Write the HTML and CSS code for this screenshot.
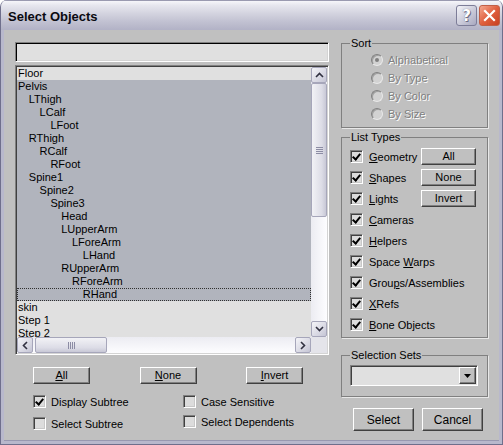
FILE: index.html
```html
<!DOCTYPE html>
<html>
<head>
<meta charset="utf-8">
<title>Select Objects</title>
<link rel="stylesheet" href="styles.css">
</head>
<body>
<div class="window">
  <div class="titlebar">
    <span class="title">Select Objects</span>
    <div class="tbtns">
      <span class="tbtn help">?</span>
      <span class="tbtn close"><svg width="13" height="13" viewBox="0 0 13 13"><path d="M2 2 L11 11 M11 2 L2 11" stroke="#fff" stroke-width="2.2" stroke-linecap="square"/></svg></span>
    </div>
  </div>
  <div class="client">
    <div class="leftcol">
      <div class="search"></div>
      <div class="listbox">
        <div class="items">
          <div class="row l0">Floor</div>
          <div class="row sel l0">Pelvis</div>
          <div class="row sel l1">LThigh</div>
          <div class="row sel l2">LCalf</div>
          <div class="row sel l3">LFoot</div>
          <div class="row sel l1">RThigh</div>
          <div class="row sel l2">RCalf</div>
          <div class="row sel l3">RFoot</div>
          <div class="row sel l1">Spine1</div>
          <div class="row sel l2">Spine2</div>
          <div class="row sel l3">Spine3</div>
          <div class="row sel l4">Head</div>
          <div class="row sel l4">LUpperArm</div>
          <div class="row sel l5">LForeArm</div>
          <div class="row sel l6">LHand</div>
          <div class="row sel l4">RUpperArm</div>
          <div class="row sel l5">RForeArm</div>
          <div class="row sel focus l6">RHand</div>
          <div class="row l0">skin</div>
          <div class="row l0">Step 1</div>
          <div class="row l0">Step 2</div>
        </div>
        <div class="vscroll">
          <span class="sbtn"><svg width="9" height="6" viewBox="0 0 9 6"><path d="M1 5 L4.5 1.5 L8 5" fill="none" stroke="#303040" stroke-width="1.6"/></svg></span>
          <div class="vtrack">
            <span class="vthumb"><span class="grip-h"></span></span>
          </div>
          <span class="sbtn"><svg width="9" height="6" viewBox="0 0 9 6"><path d="M1 1 L4.5 4.5 L8 1" fill="none" stroke="#303040" stroke-width="1.6"/></svg></span>
        </div>
        <div class="hscroll">
          <span class="sbtn"><svg width="6" height="9" viewBox="0 0 6 9"><path d="M5 1 L1.5 4.5 L5 8" fill="none" stroke="#303040" stroke-width="1.6"/></svg></span>
          <div class="htrack">
            <span class="hthumb"><span class="grip-v"></span></span>
          </div>
          <span class="sbtn"><svg width="6" height="9" viewBox="0 0 6 9"><path d="M1 1 L4.5 4.5 L1 8" fill="none" stroke="#303040" stroke-width="1.6"/></svg></span>
        </div>
        <div class="corner"></div>
      </div>
      <div class="btnrow">
        <span class="btn small"><u>A</u>ll</span>
        <span class="btn small"><u>N</u>one</span>
        <span class="btn small"><u>I</u>nvert</span>
      </div>
      <div class="opts">
        <label class="chk"><span class="box on"></span>Display Subtree</label>
        <label class="chk"><span class="box"></span>Case Sensitive</label>
        <label class="chk"><span class="box"></span>Select Subtree</label>
        <label class="chk up"><span class="box"></span>Select Dependents</label>
      </div>
    </div>
    <div class="rightcol">
      <fieldset class="group sort">
        <legend>Sort</legend>
        <div class="radio"><span class="rb on"></span><span class="dis">Alphabetical</span></div>
        <div class="radio"><span class="rb"></span><span class="dis">By Type</span></div>
        <div class="radio"><span class="rb"></span><span class="dis">By Color</span></div>
        <div class="radio"><span class="rb"></span><span class="dis">By Size</span></div>
      </fieldset>
      <fieldset class="group types">
        <legend>List Types</legend>
        <div class="trow"><label class="chk"><span class="box on"></span><span><u>G</u>eometry</span></label><span class="btn tb">All</span></div>
        <div class="trow"><label class="chk"><span class="box on"></span><span><u>S</u>hapes</span></label><span class="btn tb">None</span></div>
        <div class="trow"><label class="chk"><span class="box on"></span><span><u>L</u>ights</span></label><span class="btn tb">Invert</span></div>
        <div class="trow"><label class="chk"><span class="box on"></span><span><u>C</u>ameras</span></label></div>
        <div class="trow"><label class="chk"><span class="box on"></span><span><u>H</u>elpers</span></label></div>
        <div class="trow"><label class="chk"><span class="box on"></span><span>Space <u>W</u>arps</span></label></div>
        <div class="trow"><label class="chk"><span class="box on"></span><span>Grou<u>p</u>s/Assemblies</span></label></div>
        <div class="trow"><label class="chk"><span class="box on"></span><span><u>X</u>Refs</span></label></div>
        <div class="trow"><label class="chk"><span class="box on"></span><span><u>B</u>one Objects</span></label></div>
      </fieldset>
      <fieldset class="group sets">
        <legend>Selection Sets</legend>
        <div class="combo"><span class="drop"><svg width="7" height="4" viewBox="0 0 7 4"><path d="M0 0 H7 L3.5 4 Z" fill="#000"/></svg></span></div>
      </fieldset>
      <div class="okrow">
        <span class="btn big">Select</span>
        <span class="btn big">Cancel</span>
      </div>
    </div>
  </div>
</div>
</body>
</html>
```
FILE: styles.css
```css
* { box-sizing: border-box; }
html, body { margin: 0; padding: 0; }
body {
  width: 503px;
  height: 445px;
  overflow: hidden;
  font-family: "Liberation Sans", Arial, sans-serif;
  font-size: 11px;
  color: #000;
  background: #fff;
}
.window {
  width: 503px;
  height: 445px;
  display: flex;
  flex-direction: column;
  background: #b8b8cc;
  border: 1px solid #6f6f8c;
  border-top: none;
  border-radius: 7px 7px 0 0;
  overflow: hidden;
}
.titlebar {
  height: 30px;
  flex: none;
  display: flex;
  align-items: center;
  padding: 0 2px 0 7px;
  background: linear-gradient(#f6f6fa 0%, #e6e6ee 15%, #d2d2de 45%, #c2c2d2 70%, #b2b2c6 100%);
  border-top: 1px solid #9a9ab0;
}
.title {
  font-weight: bold;
  font-size: 13px;
  color: #0a0a10;
  flex: 1;
  padding-top: 1px;
}
.tbtns { display: flex; gap: 2px; }
.tbtn {
  width: 21px;
  height: 21px;
  border-radius: 3px;
  display: flex;
  align-items: center;
  justify-content: center;
}
.help {
  border: 1px solid #7d7d98;
  background: linear-gradient(135deg, #f4f4f8, #c6c6d6 60%, #a8a8c0);
  color: #fff;
  font-weight: bold;
  font-size: 15px;
  text-shadow: 0 0 1px #606078, 1px 1px 0 #70708a;
  font-family: "DejaVu Sans", sans-serif;
}
.close {
  border: 1px solid #c06048;
  background: linear-gradient(135deg, #f4a890, #e06040 50%, #c84020);
}
.client {
  flex: 1;
  margin: 0 3px 3px 3px;
  background: #c0c0c0;
  display: flex;
  gap: 12px;
  padding: 0 11px 0 11px;
  border-bottom: 1px solid #9898b0;
}
.leftcol {
  width: 314px;
  flex: none;
  padding-top: 12px;
}
.search {
  height: 20px;
  background: #e0e0e0;
  border-top: 1px solid #808080;
  border-left: 1px solid #808080;
  border-right: 1px solid #fff;
  border-bottom: 1px solid #fff;
  box-shadow: inset 1px 1px 0 #000, inset -1px -1px 0 #d4d4d4;
}
.listbox {
  margin-top: 3px;
  height: 290px;
  display: grid;
  grid-template-columns: 1fr 16px;
  grid-template-rows: 1fr 16px;
  background: #e0e0e0;
  border-top: 1px solid #808080;
  border-left: 1px solid #808080;
  border-right: 1px solid #fff;
  border-bottom: 1px solid #fff;
  box-shadow: inset 1px 1px 0 #404040, inset -1px -1px 0 #d4d4d4;
  padding: 1px;
}
.items {
  overflow: hidden;
  min-height: 0;
}
.row {
  height: 13px;
  line-height: 13px;
  white-space: nowrap;
}
.row.sel { background: #b1b4bd; }
.row.focus { outline: 1px dotted #303030; outline-offset: -1px; }
.l0 { padding-left: 1px; }
.l1 { padding-left: 11.8px; }
.l2 { padding-left: 22.6px; }
.l3 { padding-left: 33.4px; }
.l4 { padding-left: 44.2px; }
.l5 { padding-left: 55px; }
.l6 { padding-left: 65.8px; }
.vscroll {
  display: flex;
  flex-direction: column;
  background: linear-gradient(to right, #ececf2, #fdfdff);
}
.hscroll {
  display: flex;
  background: linear-gradient(#ececf2, #fdfdff);
}
.corner { background: #e4e4ea; }
.sbtn {
  flex: none;
  width: 16px;
  height: 16px;
  border: 1px solid #a6a6ba;
  border-radius: 2px;
  background: linear-gradient(135deg, #f4f4f8, #d4d4e0 70%, #c4c4d4);
  display: flex;
  align-items: center;
  justify-content: center;
}
.vtrack { flex: 1; position: relative; }
.htrack { flex: 1; position: relative; }
.vthumb {
  position: absolute;
  left: 0; right: 0; top: 0;
  height: 134px;
  border: 1px solid #a6a6ba;
  border-radius: 2px;
  background: linear-gradient(to right, #f2f2f6, #dcdce6 70%, #c8c8d6);
  display: flex;
  align-items: center;
  justify-content: center;
}
.hthumb {
  position: absolute;
  top: 0; bottom: 0; left: 2px;
  width: 72px;
  border: 1px solid #a6a6ba;
  border-radius: 2px;
  background: linear-gradient(#f2f2f6, #dcdce6 70%, #c8c8d6);
  display: flex;
  align-items: center;
  justify-content: center;
}
.grip-h {
  width: 7px;
  height: 7px;
  background: repeating-linear-gradient(#8c8ca4 0 1px, transparent 1px 2px);
}
.grip-v {
  width: 7px;
  height: 7px;
  background: repeating-linear-gradient(to right, #8c8ca4 0 1px, transparent 1px 2px);
}
.btn {
  display: flex;
  align-items: center;
  justify-content: center;
  background: #c0c0c0;
  border-top: 1px solid #fff;
  border-left: 1px solid #fff;
  border-right: 1px solid #404040;
  border-bottom: 1px solid #404040;
  box-shadow: inset -1px -1px 0 #808080;
  line-height: 1;
}
.btnrow {
  margin-top: 12px;
  display: flex;
  justify-content: space-between;
  padding: 0 26px 0 18px;
}
.btn.small { width: 57px; height: 17px; }
.opts {
  margin-top: 11px;
  padding-left: 18px;
  display: grid;
  grid-template-columns: 150px auto;
  row-gap: 9px;
}
.chk {
  display: flex;
  align-items: center;
  gap: 5px;
  height: 13px;
  white-space: nowrap;
}
.opts .chk.up { margin-top: -2px; }
.box {
  flex: none;
  width: 13px;
  height: 13px;
  background: #dcdcdc;
  border-top: 1px solid #808080;
  border-left: 1px solid #808080;
  border-right: 1px solid #fff;
  border-bottom: 1px solid #fff;
  box-shadow: inset 1px 1px 0 #404040, inset -1px -1px 0 #c8c8c8;
  position: relative;
}
.box.on::after {
  content: "";
  position: absolute;
  left: 3px;
  top: 1px;
  width: 3px;
  height: 6px;
  border-right: 2px solid #000;
  border-bottom: 2px solid #000;
  transform: rotate(40deg);
}
.rightcol {
  width: 147px;
  flex: none;
  padding-top: 7px;
  display: flex;
  flex-direction: column;
}
.group {
  margin: 0;
  padding: 0;
  border: 1px solid #808080;
  box-shadow: 1px 1px 0 #e8e8e8;
  min-width: 0;
}
.group legend {
  padding: 0 1px;
  margin: 0 auto 0 8px;
  line-height: 13px;
  height: 13px;
}
.sort { padding: 1px 0 4px 0; }
.radio {
  height: 18px;
  display: flex;
  align-items: center;
  gap: 5px;
  margin-left: 29px;
}
.rb {
  width: 12px;
  height: 12px;
  border-radius: 50%;
  background: #d2d2d2;
  border: 1px solid;
  border-color: #808080 #e8e8e8 #e8e8e8 #808080;
  box-shadow: inset 1px 1px 0 #a0a0a0;
  position: relative;
}
.rb.on::after {
  content: "";
  position: absolute;
  left: 3px; top: 3px;
  width: 4px; height: 4px;
  border-radius: 50%;
  background: #808080;
}
.dis { color: #808080; text-shadow: 1px 1px 0 #fff; }
.types {
  margin-top: 3px;
  padding: 2px 0 2px 0;
}
.trow {
  height: 21px;
  display: flex;
  align-items: center;
  padding: 0 11px 0 8px;
}
.trow .chk { gap: 6px; }
.btn.tb { width: 55px; height: 17px; margin-left: auto; }
.sets {
  margin-top: 11px;
  padding: 3px 0 10px 0;
}
.combo {
  height: 21px;
  margin: 0 9px 0 8px;
  background: #e0e0e0;
  border-top: 1px solid #808080;
  border-left: 1px solid #808080;
  border-right: 1px solid #fff;
  border-bottom: 1px solid #fff;
  box-shadow: inset 1px 1px 0 #404040;
  display: flex;
  justify-content: flex-end;
  padding: 1px;
}
.drop {
  width: 17px;
  height: 17px;
  display: flex;
  align-items: center;
  justify-content: center;
  background: #c0c0c0;
  border-top: 1px solid #fff;
  border-left: 1px solid #fff;
  border-right: 1px solid #404040;
  border-bottom: 1px solid #404040;
  box-shadow: inset -1px -1px 0 #808080;
}
.okrow {
  margin-top: 11px;
  display: flex;
  gap: 8px;
  padding-left: 12px;
}
.btn.big { width: 61px; height: 23px; font-size: 12px; }
```
